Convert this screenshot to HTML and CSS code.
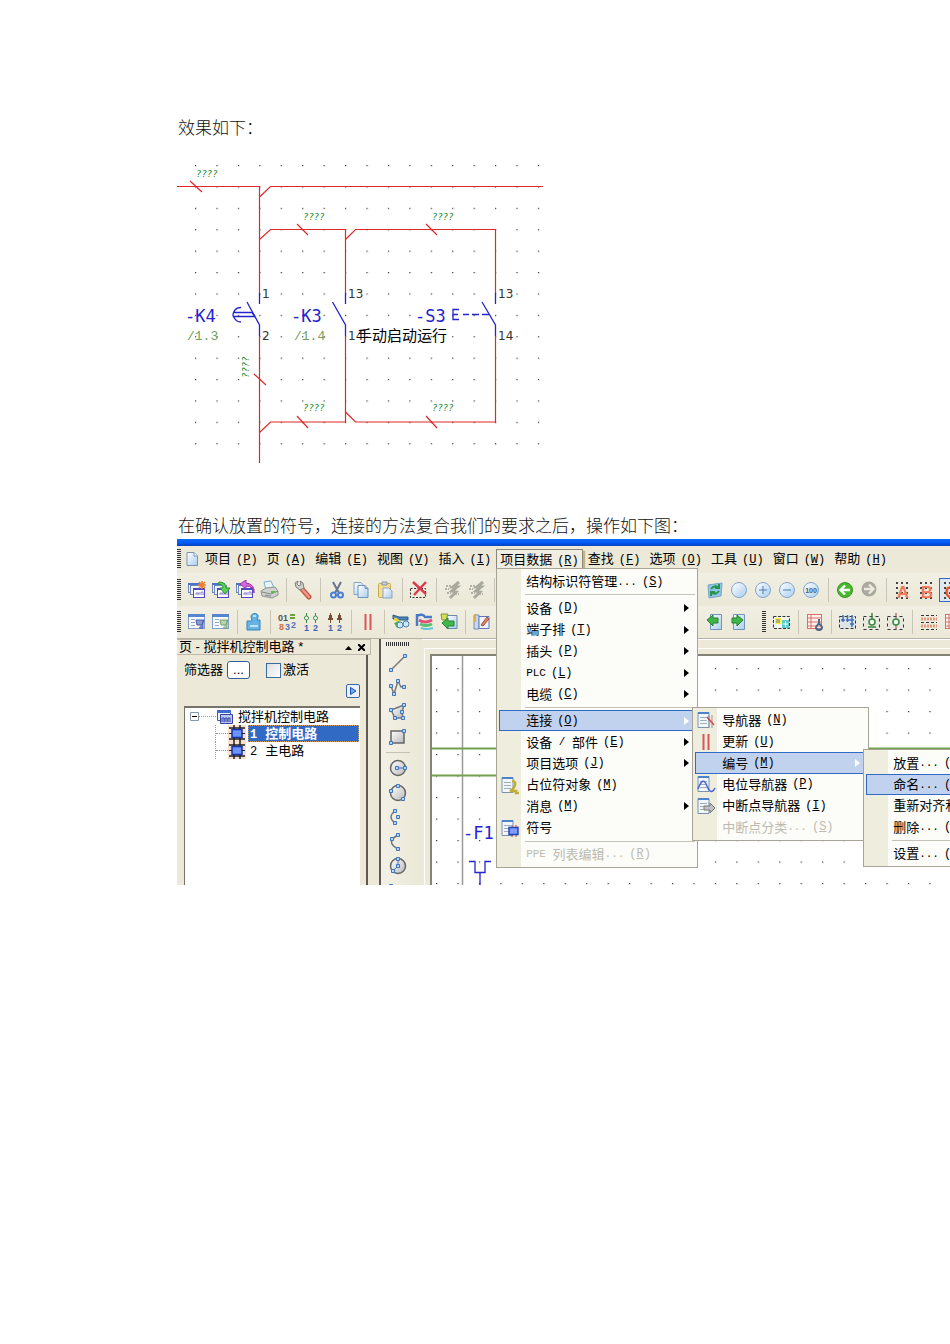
FILE: index.html
```html
<!DOCTYPE html>
<html lang="zh-CN">
<head>
<meta charset="utf-8">
<title>电气控制</title>
<link rel="stylesheet" href="styles.css">
</head>
<body>
<svg class="defs" aria-hidden="true">
  <defs>
    <linearGradient id="sky" x1="0" y1="0" x2="1" y2="1"><stop offset="0" stop-color="#fff"/><stop offset="1" stop-color="#a9cdf0"/></linearGradient>
    <linearGradient id="steel" x1="0" y1="0" x2="1" y2="1"><stop offset="0" stop-color="#fff"/><stop offset="1" stop-color="#b9b9b9"/></linearGradient>
    <pattern id="grid" x="4" y="12" width="21.45" height="21.5" patternUnits="userSpaceOnUse"><rect width="1.2" height="1.2" fill="#333"/></pattern>
    <pattern id="dots" x="18" y="5" width="21.43" height="21.4" patternUnits="userSpaceOnUse"><rect width="1.2" height="1.2" fill="#333"/></pattern>
  </defs>
  <symbol id="i-page" viewBox="0 0 14 16"><path d="M2 1.500h7l3.500 3.500v9.500h-10.500z" fill="url(#sky)" stroke="#7893b5"/><path d="M9 1.500v3.500h3.500" fill="#fff" stroke="#7893b5"/></symbol>
  <symbol id="i-wins" viewBox="0 0 20 20"><rect x="1.500" y="3.500" width="12" height="9" fill="#edf4ff" stroke="#6d86bd"/><path d="M1 4h13" stroke="#4a74c8" stroke-width="2"/><rect x="3.500" y="5.500" width="12" height="9" fill="#edf4ff" stroke="#6d86bd"/><rect x="6.500" y="8.500" width="11" height="9" fill="#fff" stroke="#5146bd"/><path d="M6 9h12" stroke="#5146bd" stroke-width="2"/><path d="M9 15v-2h2v2m1 0v-3m2 3v-3h2v3" fill="none" stroke="#8a80cc"/></symbol>
  <symbol id="i-new" viewBox="0 0 20 20"><use href="#i-wins"/><path d="M15 1v8M11 5h8M12 2l6 6M18 2l-6 6" stroke="#f08030" stroke-width="1.500"/></symbol>
  <symbol id="i-open" viewBox="0 0 20 20"><use href="#i-wins"/><path d="M8 2q7 0 7 6h4l-5 6-5-6h3q0-4-5-4z" fill="#5ed34d" stroke="#269332"/></symbol>
  <symbol id="i-close" viewBox="0 0 20 20"><use href="#i-wins"/><path d="M19 13q0-7-8-7v3l-6-5 6-4v3q9 1 8 10z" fill="#d768dc" stroke="#9d34a9"/></symbol>
  <symbol id="i-print" viewBox="0 0 20 20"><path d="M5 2l7-1 3 7-8 2z" fill="#e6f5ff" stroke="#7faed0"/><path d="M2 11l5-3 9-1 3 4v4l-6 3-10-2z" fill="#cfd2cf" stroke="#8e9390"/><path d="M3 12l9 2 7-3M6 15l6 1" fill="none" stroke="#848a86"/><path d="M12 12h4" stroke="#5cb95c" stroke-width="2"/></symbol>
  <symbol id="i-wrench" viewBox="0 0 20 20"><path d="M8 8l8 9" stroke="#c85a45" stroke-width="5" stroke-linecap="round"/><path d="M9 9l7 8" stroke="#ef9d8d" stroke-width="2" stroke-linecap="round"/><path d="M5 1L2 3l1 4 4 3 4-2-1-5-3-2 1 4-2 1-2-2z" fill="#d2d2cf" stroke="#7d7d79"/></symbol>
  <symbol id="i-cut" viewBox="0 0 20 20"><path d="M6 2l6 11M14 2L8 13" stroke="#65758e" stroke-width="2"/><circle cx="6.500" cy="15" r="2.500" fill="none" stroke="#4a7fd4" stroke-width="2"/><circle cx="13.500" cy="15" r="2.500" fill="none" stroke="#4a7fd4" stroke-width="2"/></symbol>
  <symbol id="i-copy" viewBox="0 0 20 20"><path d="M3 2.500h7l2 2v10H3z" fill="url(#sky)" stroke="#8aa5c5"/><path d="M7 5.500h7l3 3v9H7z" fill="url(#sky)" stroke="#6f92b9"/><path d="M14 5.500v3h3" fill="none" stroke="#6f92b9"/></symbol>
  <symbol id="i-paste" viewBox="0 0 20 20"><rect x="3.500" y="3.500" width="12" height="14" rx="1" fill="#f4de93" stroke="#c6a94b"/><path d="M7 2h5v3H7z" fill="#c9d0d8" stroke="#8c949e"/><path d="M8 8h6l3 3v7H8z" fill="url(#sky)" stroke="#8aa5c5"/></symbol>
  <symbol id="i-del" viewBox="0 0 20 20"><rect x="1.500" y="8.500" width="15" height="9" fill="none" stroke="#333" stroke-dasharray="2 1.500"/><path d="M4 2l13 12M17 2L5 15" stroke="#d83b4b" stroke-width="2.400"/></symbol>
  <symbol id="i-flash" viewBox="0 0 20 20"><path d="M16 2l-6 5 4 0-5 4 4 1-6 6" fill="none" stroke="#aaa99d" stroke-width="3"/><path d="M3 6h5M2 9h4M4 13h4M12 14h4" stroke="#b3b1a5" stroke-width="2" stroke-dasharray="2 1"/></symbol>
  <symbol id="i-refresh" viewBox="0 0 20 20"><path d="M3 5l14-2-1 13-12 2z" fill="#93c4ec" stroke="#76a4cc"/><path d="M6 9q4-5 8-1M14 4v4h-4M14 11q-4 5-8 1M6 16v-4h4" fill="none" stroke="#249448" stroke-width="2"/></symbol>
  <symbol id="i-zoom" viewBox="0 0 20 20"><circle cx="10" cy="10" r="7.500" fill="url(#sky)" stroke="#80a5cc"/></symbol>
  <symbol id="i-zin" viewBox="0 0 20 20"><use href="#i-zoom"/><path d="M6 10h8M10 6v8" stroke="#4f7cab"/></symbol>
  <symbol id="i-zout" viewBox="0 0 20 20"><use href="#i-zoom"/><path d="M6 10h8" stroke="#4f7cab"/></symbol>
  <symbol id="i-back" viewBox="0 0 20 20"><circle cx="10" cy="10" r="7.500" fill="#46b92d" stroke="#369322"/><path d="M15 10H6M10 5.500L5.500 10l4.500 4.500" fill="none" stroke="#fff" stroke-width="2.400"/></symbol>
  <symbol id="i-fwd" viewBox="0 0 20 20"><circle cx="10" cy="9" r="7.500" fill="#aaa99f"/><path d="M5 9h9M10 4.500L14.500 9 10 13.500" fill="none" stroke="#eceade" stroke-width="2.400"/></symbol>
  <symbol id="i-gridb" viewBox="0 0 20 20"><path d="M3 3h15M3 8h15M3 13h15M3 18h15" stroke="#444" stroke-width="2" stroke-dasharray="2 3"/></symbol>
  <symbol id="i-nav" viewBox="0 0 20 20"><rect x="1.500" y="2.500" width="16" height="14" fill="#f7fbff" stroke="#7d9dca"/><path d="M1 3.500h17" stroke="#5685d0" stroke-width="3"/><path d="M4 7.500h4M4 10.500h4M4 13.500h4" stroke="#9aa8c0"/><path d="M9 8h8l-2 5h-5zM16 8v8h-4" fill="#8897d8" stroke="#4e5da8"/></symbol>
  <symbol id="i-nav2" viewBox="0 0 20 20"><rect x="1.500" y="2.500" width="16" height="14" fill="#f7fbff" stroke="#7d9dca"/><path d="M1 3.500h17" stroke="#5685d0" stroke-width="3"/><path d="M4 7.500h4M4 10.500h4M4 13.500h4" stroke="#9aa8c0"/><path d="M9 8h8l-2 5h-5zM16 8v8h-4" fill="#b7d3a9" stroke="#79a06e"/></symbol>
  <symbol id="i-device" viewBox="0 0 20 20"><path d="M8 8q-3-6 3-6.500 5 .5 2 6.500h3v10H3V9h5z" fill="#66b4e6" stroke="#3485bd"/><path d="M6 14h8M9 4h3" stroke="#bce3fa" stroke-width="2"/></symbol>
  <symbol id="i-term" viewBox="0 0 20 20"><path d="M5.500 1v10M14.500 1v10" stroke="#388b43"/><circle cx="5.500" cy="6" r="2" fill="#fff" stroke="#388b43"/><circle cx="14.500" cy="6" r="2" fill="#fff" stroke="#388b43"/></symbol>
  <symbol id="i-plug" viewBox="0 0 20 20"><path d="M5.500 1v3M14.500 1v3M5.500 8v3M14.500 8v3" stroke="#754d34"/><path d="M4 3h3v3h1v2H3V6h1zM13 3h3v3h1v2h-5V6h1z" fill="#754d34"/></symbol>
  <symbol id="i-bars" viewBox="0 0 20 20"><path d="M7.500 2v16M12.500 2v16" stroke="#d9575a" stroke-width="2"/></symbol>
  <symbol id="i-cable" viewBox="0 0 20 20"><path d="M2 3l6 2h9v3H8L2 7z" fill="#4c82ca" stroke="#2b6178"/><path d="M3 7q5 1 5 5" fill="none" stroke="#e8d43e" stroke-width="3"/><path d="M3 11l5-2 2 5-4 2z" fill="#4eb05b"/><circle cx="9" cy="13" r="3" fill="#cbe8ff" stroke="#4d81b5"/><circle cx="15" cy="12" r="3" fill="#cbe8ff" stroke="#4d81b5"/></symbol>
  <symbol id="i-cable2" viewBox="0 0 20 20"><path d="M2 2v12M2 4q6-3 8 1h7" stroke="#4979c5" stroke-width="2.500" fill="none"/><path d="M4 8q6 4 13 0" stroke="#e05078" stroke-width="3" fill="none"/><path d="M5 12q6 3 12 0" stroke="#59bf73" stroke-width="3" fill="none"/><path d="M6 16q6 2 12 0" stroke="#62c4dc" stroke-width="2" fill="none"/></symbol>
  <symbol id="i-import" viewBox="0 0 20 20"><path d="M8 3.500h10v13H8z" fill="url(#sky)" stroke="#6689b0"/><path d="M2 2h7l-2 6H3z" fill="#d5df55" stroke="#799a46"/><path d="M3 11l6-5v3h6v5H9v3z" fill="#43b84a" stroke="#248431"/></symbol>
  <symbol id="i-edit" viewBox="0 0 20 20"><path d="M2 3h5v14H2z" fill="#c7d8ef" stroke="#7590bf"/><path d="M7 4.500h10v12H7z" fill="#eef2ff" stroke="#6477b8"/><path d="M3 2v8" stroke="#e2af3c" stroke-width="2"/><path d="M9 13l6-8 2 2-6 7z" fill="#ec8057" stroke="#9d5340"/></symbol>
  <symbol id="i-pgl" viewBox="0 0 20 20"><path d="M5.500 2.500h11v15h-11z" fill="url(#sky)" stroke="#7594bb"/><path d="M2 8l6-5v3h5v5H8v3z" fill="#42b548" stroke="#23802d"/></symbol>
  <symbol id="i-pgr" viewBox="0 0 20 20"><path d="M4.500 2.500h11v15h-11z" fill="url(#sky)" stroke="#7594bb"/><path d="M14 8L8 3v3H3v5h5v3z" fill="#42b548" stroke="#23802d"/></symbol>
  <symbol id="i-macro" viewBox="0 0 20 20"><rect x="1.500" y="4.500" width="16" height="12" fill="#f5f5ee" stroke="#333" stroke-dasharray="3 1.500"/><path d="M3 6h6v6H3z" fill="#f4ee4b"/><path d="M4 8h4M4 10h4" stroke="#777"/><path d="M10 8h7v8h-7z" fill="#5dcbd0"/><path d="M11 12h5M13.500 9v6" stroke="#fff"/></symbol>
  <symbol id="i-list" viewBox="0 0 20 20"><rect x="2.500" y="2.500" width="14" height="14" fill="#fff0ed" stroke="#d37265"/><path d="M6 2v15M3 6h13M3 10h13M3 14h13" stroke="#d37265"/><path d="M14 7v4l-3 4q0 3 3 3t3-3l-3-4" fill="none" stroke="#4c6888" stroke-width="2"/></symbol>
  <symbol id="i-box1" viewBox="0 0 20 20"><rect x="1.500" y="4.500" width="16" height="12" fill="#dce4e8" stroke="#333" stroke-dasharray="3 2"/><path d="M5 3v7M9.500 3v7M14 3v12M3 8h4M8 8h4M12 8h4M12 12h4" stroke="#426fb9" stroke-width="1.500"/></symbol>
  <symbol id="i-box2" viewBox="0 0 20 20"><rect x="1.500" y="4.500" width="16" height="13" fill="#e8e8df" stroke="#333" stroke-dasharray="3 3"/><path d="M10 1v6M6 15h8" stroke="#388744" stroke-width="1.500"/><circle cx="10" cy="10" r="3" fill="#f0fff0" stroke="#388744" stroke-width="1.500"/></symbol>
  <symbol id="i-box3" viewBox="0 0 20 20"><rect x="1.500" y="4.500" width="16" height="13" fill="#e8e8df" stroke="#333" stroke-dasharray="3 3"/><path d="M10 1v17" stroke="#8c4444"/><circle cx="10" cy="10" r="3" fill="#f0fff0" stroke="#388744" stroke-width="1.500"/></symbol>
  <symbol id="i-box4" viewBox="0 0 20 20"><path d="M2 3.500h16M2 10.500h16M2 17.500h16" stroke="#333" stroke-dasharray="3 2"/><path d="M2 7h16M2 14h16" stroke="#e49a7f" stroke-width="3" stroke-dasharray="2 1"/></symbol>
  <symbol id="i-project" viewBox="0 0 18 16"><path d="M1.500 1.500h13v10h-13z" fill="#eaf2ff" stroke="#3d5caa"/><path d="M1 2.500h14" stroke="#3f6bd0" stroke-width="3"/><path d="M4.500 5.500h12v9h-12z" fill="#b9c7f7" stroke="#3540a0"/><path d="M6 13v-4h2v4m1 0V9h2v4m1 0V9h2v4" fill="none" stroke="#3540a0"/></symbol>
  <symbol id="i-chip" viewBox="0 0 18 17"><path d="M0 0h18v17H0z" fill="#f6dfcf"/><path d="M6 0v17M12 0v17M1 3h16M1 14h16" stroke="#222" stroke-width="1.500"/><path d="M4 4.500h10v8H4z" fill="#6a94ff" stroke="#1630a8" stroke-width="1.500"/><path d="M1 8.500h3M14 8.500h3" stroke="#222"/></symbol>
  <symbol id="i-doc" viewBox="0 0 20 20"><path d="M2 2.500h11v15H2z" fill="#f2f6fb" stroke="#7a93ad"/><path d="M2 3h11" stroke="#4c83c9" stroke-width="2"/><path d="M4 7.500h7M4 10.500h7M4 13.500h7" stroke="#9eb0bf"/></symbol>
  <symbol id="i-m1" viewBox="0 0 20 20"><use href="#i-doc"/><path d="M12 6q4 0 3 4t-5 6h6v2h3" fill="none" stroke="#bfae35" stroke-width="2.500"/></symbol>
  <symbol id="i-m2" viewBox="0 0 20 20"><use href="#i-doc"/><path d="M12 7v12M16 7v12" stroke="#bd3e4c"/><path d="M9 9.500h9v7H9z" fill="#7f9dff" stroke="#2744b5" stroke-width="1.500"/></symbol>
  <symbol id="i-m3" viewBox="0 0 20 20"><use href="#i-doc"/><path d="M13 5v13M16 5v13" stroke="#999"/><path d="M11 7l7 8" stroke="#dc4150" stroke-width="1.500"/></symbol>
  <symbol id="i-m4" viewBox="0 0 20 20"><use href="#i-doc"/><path d="M2 15q5-14 9-3 4 10 8 2" fill="none" stroke="#4765da" stroke-width="1.500"/></symbol>
  <symbol id="i-m5" viewBox="0 0 20 20"><use href="#i-doc"/><path d="M8 10h6V7l5 5-5 5v-3H8z" fill="#bfc1c2" stroke="#777"/></symbol>
  <symbol id="nd" viewBox="0 0 4 4"><path d="M.5.5h3v3h-3z" fill="#bcd8ff" stroke="#3c74bd"/></symbol>
  <symbol id="d-line" viewBox="0 0 20 20"><path d="M3 17L17 3" stroke="#777" stroke-width="1.500"/><use href="#nd" x="1" y="15" width="4" height="4"/><use href="#nd" x="15" y="1" width="4" height="4"/></symbol>
  <symbol id="d-poly" viewBox="0 0 20 20"><path d="M3 8l3 8L10 3l3 6 4-1" fill="none" stroke="#777" stroke-width="1.500"/><use href="#nd" x="1" y="6" width="4" height="4"/><use href="#nd" x="4" y="14" width="4" height="4"/><use href="#nd" x="8" y="1" width="4" height="4"/><use href="#nd" x="14" y="7" width="4" height="4"/></symbol>
  <symbol id="d-gon" viewBox="0 0 20 20"><path d="M3 8l13-5-2 7 1 6H7z" fill="url(#steel)" stroke="#777" stroke-width="1.500"/><use href="#nd" x="1" y="6" width="4" height="4"/><use href="#nd" x="14" y="1" width="4" height="4"/><use href="#nd" x="12" y="8" width="4" height="4"/><use href="#nd" x="13" y="14" width="4" height="4"/><use href="#nd" x="5" y="14" width="4" height="4"/></symbol>
  <symbol id="d-rect" viewBox="0 0 20 20"><path d="M3 4h13v12H3z" fill="url(#steel)" stroke="#666" stroke-width="1.500"/><use href="#nd" x="1" y="14" width="4" height="4"/><use href="#nd" x="14" y="2" width="4" height="4"/></symbol>
  <symbol id="d-circ" viewBox="0 0 20 20"><circle cx="10" cy="10" r="7.500" fill="url(#steel)" stroke="#666" stroke-width="1.500"/><path d="M9 10h8" stroke="#3c74bd"/><use href="#nd" x="7" y="8" width="4" height="4"/><use href="#nd" x="15" y="8" width="4" height="4"/></symbol>
  <symbol id="d-circ3" viewBox="0 0 20 20"><circle cx="10" cy="10" r="7.500" fill="url(#steel)" stroke="#666" stroke-width="1.500"/><use href="#nd" x="8" y="1" width="4" height="4"/><use href="#nd" x="1" y="6" width="4" height="4"/><use href="#nd" x="13" y="14" width="4" height="4"/></symbol>
  <symbol id="d-arc" viewBox="0 0 20 20"><path d="M7 4Q-1 10 7 16" fill="none" stroke="#777" stroke-width="1.500"/><use href="#nd" x="5" y="2" width="4" height="4"/><use href="#nd" x="5" y="14" width="4" height="4"/><use href="#nd" x="8" y="8" width="4" height="4"/></symbol>
  <symbol id="d-arc3" viewBox="0 0 20 20"><path d="M10 3Q-3 10 10 17" fill="none" stroke="#777" stroke-width="1.500"/><use href="#nd" x="8" y="1" width="4" height="4"/><use href="#nd" x="8" y="15" width="4" height="4"/><use href="#nd" x="2" y="5" width="4" height="4"/></symbol>
  <symbol id="d-sect" viewBox="0 0 20 20"><circle cx="10" cy="10" r="7.500" fill="url(#steel)" stroke="#666" stroke-width="1.500"/><path d="M10 3v7l-5 5" fill="none" stroke="#3c74bd"/><use href="#nd" x="8" y="1" width="4" height="4"/><use href="#nd" x="8" y="8" width="4" height="4"/><use href="#nd" x="3" y="13" width="4" height="4"/></symbol>
  <symbol id="d-spl" viewBox="0 0 20 20"><path d="M3 5q5-2 9 7" fill="none" stroke="#777" stroke-width="1.500"/><use href="#nd" x="1" y="3" width="4" height="4"/><use href="#nd" x="8" y="6" width="4" height="4"/></symbol>
</svg>

<main class="doc">
  <p class="para">效果如下：</p>
  <svg class="circuit" width="366" height="304" viewBox="177 160 366 304" role="img" aria-label="电路图">
    <svg x="177" y="160" width="366" height="288" viewBox="0 0 366 288"><rect width="366" height="288" fill="url(#dots)"/></svg>
    <g fill="none" stroke="#e02828" stroke-width="1.200">
      <path d="M177 186.500h82.500V293M259.500 336v127M259.500 197l11-10.500H543M259.500 239.500l11-10h75V293M345.500 239.500l10-10h140V293"/>
      <path d="M345.500 336v86h-75l-11 10.500M345.500 412l10 10h140v-86"/>
      <path d="M190 181l12 11M297 224l11 11M426 224l11 11M254 374l12 11M297 416l11 12M426 416l11 12"/>
    </g>
    <g fill="none" stroke="#2424cc" stroke-width="1.300">
      <path d="M259.500 293v11M259.500 336v-11l-12.500-23M345.500 293v11M345.500 336v-11l-13-23M495.500 293v11M495.500 336v-11l-13.500-23"/>
      <path d="M241 307.500q-4 0-6 2.500-4 5 0 9 2 3 6 3M233 312.500h19M233 316.500h22M255 316.500l-3-4"/>
      <path d="M459 309.500h-6v10h6M453 314.500h5M463 314.500h6M472 314.500h7M482 314.500h7"/>
    </g>
    <g class="dev"><text x="185" y="322">-K4</text><text x="291" y="322">-K3</text><text x="415" y="322">-S3</text></g>
    <g class="ref"><text x="187" y="340">/1.3</text><text x="294" y="340">/1.4</text></g>
    <g class="pin"><text x="262" y="298">1</text><text x="262" y="340">2</text><text x="348" y="298">13</text><text x="348" y="340">14</text><text x="498" y="298">13</text><text x="498" y="340">14</text></g>
    <text class="note" x="357" y="341">手动启动运行</text>
    <g class="unk"><text x="196" y="177">????</text><text x="303" y="220">????</text><text x="432" y="220">????</text><text x="303" y="411">????</text><text x="432" y="411">????</text><text transform="translate(249 378) rotate(-90)">????</text></g>
  </svg>
  <p class="para para-next">在确认放置的符号，连接的方法复合我们的要求之后，操作如下图：</p>

  <section class="app">
    <div class="titlebar"></div>
    <nav class="menubar">
      <span class="grip"></span>
      <svg class="pageicon" width="14" height="16"><use href="#i-page"/></svg>
      <button class="mb">项目<kbd>(<u>P</u>)</kbd></button>
      <button class="mb">页<kbd>(<u>A</u>)</kbd></button>
      <button class="mb">编辑<kbd>(<u>E</u>)</kbd></button>
      <button class="mb">视图<kbd>(<u>V</u>)</kbd></button>
      <button class="mb">插入<kbd>(<u>I</u>)</kbd></button>
      <div class="anchor">
        <button class="mb mb-open">项目数据<kbd>(<u>R</u>)</kbd></button>
        <div class="menu menu-main">
          <button class="mi">结构标识符管理<i>...</i><kbd>(<u>S</u>)</kbd></button>
          <hr class="msep">
          <button class="mi more">设备<kbd>(<u>D</u>)</kbd></button>
          <button class="mi more">端子排<kbd>(<u>T</u>)</kbd></button>
          <button class="mi more">插头<kbd>(<u>P</u>)</kbd></button>
          <button class="mi more"><i>PLC</i><kbd>(<u>L</u>)</kbd></button>
          <button class="mi more">电缆<kbd>(<u>C</u>)</kbd></button>
          <hr class="msep">
          <div class="mi-wrap">
            <button class="mi more on">连接<kbd>(<u>O</u>)</kbd></button>
            <div class="menu menu-conn">
              <button class="mi"><svg><use href="#i-m3"/></svg>导航器<kbd>(<u>N</u>)</kbd></button>
              <button class="mi"><svg><use href="#i-bars"/></svg>更新<kbd>(<u>U</u>)</kbd></button>
              <div class="mi-wrap">
                <button class="mi more on">编号<kbd>(<u>M</u>)</kbd></button>
                <div class="menu menu-num">
                  <button class="mi">放置<i>...</i><kbd>(<u>P</u>)</kbd></button>
                  <button class="mi on">命名<i>...</i><kbd>(<u>N</u>)</kbd></button>
                  <button class="mi">重新对齐和</button>
                  <button class="mi">删除<i>...</i><kbd>(<u>D</u>)</kbd></button>
                  <hr class="msep">
                  <button class="mi">设置<i>...</i><kbd>(<u>S</u>)</kbd></button>
                </div>
              </div>
              <button class="mi"><svg><use href="#i-m4"/></svg>电位导航器<kbd>(<u>P</u>)</kbd></button>
              <button class="mi"><svg><use href="#i-m5"/></svg>中断点导航器<kbd>(<u>I</u>)</kbd></button>
              <button class="mi" disabled>中断点分类<i>...</i><kbd>(<u>S</u>)</kbd></button>
            </div>
          </div>
          <button class="mi more">设备<i> / </i>部件<kbd>(<u>E</u>)</kbd></button>
          <button class="mi more">项目选项<kbd>(<u>J</u>)</kbd></button>
          <button class="mi"><svg><use href="#i-m1"/></svg>占位符对象<kbd>(<u>M</u>)</kbd></button>
          <button class="mi more">消息<kbd>(<u>M</u>)</kbd></button>
          <button class="mi"><svg><use href="#i-m2"/></svg>符号</button>
          <hr class="msep">
          <button class="mi" disabled><i>PPE </i>列表编辑<i>...</i><kbd>(<u>R</u>)</kbd></button>
        </div>
      </div>
      <button class="mb">查找<kbd>(<u>F</u>)</kbd></button>
      <button class="mb">选项<kbd>(<u>O</u>)</kbd></button>
      <button class="mb">工具<kbd>(<u>U</u>)</kbd></button>
      <button class="mb">窗口<kbd>(<u>W</u>)</kbd></button>
      <button class="mb">帮助<kbd>(<u>H</u>)</kbd></button>
    </nav>

    <div class="toolbar toolbar-std">
      <div class="tgroup tgroup-left">
        <span class="grip"></span>
        <button class="tb" aria-label="新建"><svg><use href="#i-new"/></svg></button>
        <button class="tb" aria-label="打开"><svg><use href="#i-open"/></svg></button>
        <button class="tb" aria-label="关闭"><svg><use href="#i-close"/></svg></button>
        <button class="tb" aria-label="打印"><svg><use href="#i-print"/></svg></button>
        <span class="tsep"></span>
        <button class="tb" aria-label="设置"><svg><use href="#i-wrench"/></svg></button>
        <span class="tsep"></span>
        <button class="tb" aria-label="剪切"><svg><use href="#i-cut"/></svg></button>
        <button class="tb" aria-label="复制"><svg><use href="#i-copy"/></svg></button>
        <button class="tb" aria-label="粘贴"><svg><use href="#i-paste"/></svg></button>
        <span class="tsep"></span>
        <button class="tb" aria-label="删除"><svg><use href="#i-del"/></svg></button>
        <span class="tsep"></span>
        <button class="tb" aria-label="撤销"><svg><use href="#i-flash"/></svg></button>
        <button class="tb" aria-label="重做"><svg><use href="#i-flash"/></svg></button>
        <span class="tsep"></span>
      </div>
      <div class="tgroup">
        <button class="tb" aria-label="刷新"><svg><use href="#i-refresh"/></svg></button>
        <button class="tb" aria-label="缩放"><svg><use href="#i-zoom"/></svg></button>
        <button class="tb" aria-label="放大"><svg><use href="#i-zin"/></svg></button>
        <button class="tb" aria-label="缩小"><svg><use href="#i-zout"/></svg></button>
        <button class="tb" aria-label="整页"><svg><use href="#i-zoom"/><text x="10" y="12.500" text-anchor="middle" class="tiny" fill="#44617f">100</text></svg></button>
        <span class="tsep"></span>
        <button class="tb" aria-label="后退"><svg><use href="#i-back"/></svg></button>
        <button class="tb" aria-label="前进"><svg><use href="#i-fwd"/></svg></button>
        <span class="tsep"></span>
        <button class="tb" aria-label="栅格 A"><svg><use href="#i-gridb"/><text x="10" y="18" text-anchor="middle" class="big" fill="#ef7b5d">A</text></svg></button>
        <button class="tb" aria-label="栅格 B"><svg><use href="#i-gridb"/><text x="10" y="18" text-anchor="middle" class="big" fill="#ef7b5d">B</text></svg></button>
        <button class="tb tb-on" aria-label="栅格 C"><svg><use href="#i-gridb"/><text x="10" y="18" text-anchor="middle" class="big" fill="#e75331">C</text></svg></button>
      </div>
    </div>
    <div class="toolbar toolbar-last">
      <div class="tgroup tgroup-left">
        <span class="grip"></span>
        <button class="tb" aria-label="页导航器"><svg><use href="#i-nav"/></svg></button>
        <button class="tb" aria-label="图形导航器"><svg><use href="#i-nav2"/></svg></button>
        <span class="tsep"></span>
        <button class="tb" aria-label="设备"><svg><use href="#i-device"/></svg></button>
        <span class="tsep"></span>
        <button class="tb" aria-label="编号"><svg><text x="1" y="9" class="mid" fill="#555">01</text><text x="2" y="18" class="mid" fill="#d27048">8</text><text x="8" y="18" class="mid" fill="#5574bc">3</text><path d="M13 3h5M13 6h5" stroke="#69a240" stroke-width="2"/><text x="14" y="16" class="mid" fill="#5574bc">2</text></svg></button>
        <button class="tb" aria-label="端子"><svg><use href="#i-term"/><text x="3" y="19" class="mid" fill="#3f65b5">1</text><text x="12" y="19" class="mid" fill="#3f65b5">2</text></svg></button>
        <button class="tb" aria-label="插头"><svg><use href="#i-plug"/><text x="3" y="19" class="mid" fill="#3f65b5">1</text><text x="12" y="19" class="mid" fill="#3f65b5">2</text></svg></button>
        <span class="tsep"></span>
        <button class="tb" aria-label="连接"><svg><use href="#i-bars"/></svg></button>
        <span class="tsep"></span>
        <button class="tb" aria-label="电缆"><svg><use href="#i-cable"/></svg></button>
        <button class="tb" aria-label="电缆编辑"><svg><use href="#i-cable2"/></svg></button>
        <button class="tb" aria-label="导入"><svg><use href="#i-import"/></svg></button>
        <span class="tsep"></span>
        <button class="tb" aria-label="编辑"><svg><use href="#i-edit"/></svg></button>
      </div>
      <div class="tgroup">
        <button class="tb" aria-label="上一页"><svg><use href="#i-pgl"/></svg></button>
        <button class="tb" aria-label="下一页"><svg><use href="#i-pgr"/></svg></button>
        <span class="grip grip-mid"></span>
        <button class="tb" aria-label="宏"><svg><use href="#i-macro"/></svg></button>
        <span class="tsep"></span>
        <button class="tb" aria-label="列表"><svg><use href="#i-list"/></svg></button>
        <span class="tsep"></span>
        <button class="tb" aria-label="黑盒"><svg><use href="#i-box1"/></svg></button>
        <button class="tb" aria-label="PLC 盒"><svg><use href="#i-box2"/></svg></button>
        <button class="tb" aria-label="位置盒"><svg><use href="#i-box3"/></svg></button>
        <span class="tsep"></span>
        <button class="tb" aria-label="结构盒"><svg><use href="#i-box4"/></svg></button>
        <button class="tb" aria-label="端子排"><svg><use href="#i-list"/></svg></button>
      </div>
    </div>

    <div class="work">
      <aside class="panel">
        <header class="phead"><span>页 - 搅拌机控制电路 *</span>
          <button class="pbtn" aria-label="收起"><svg width="7" height="5"><path d="M0 5l3.500-4L7 5z"/></svg></button>
          <button class="pbtn" aria-label="关闭"><svg width="7" height="7"><path d="M0 0l7 7M7 0L0 7" stroke="#000" stroke-width="2"/></svg></button>
        </header>
        <div class="pbody">
          <div class="filter">
            <label for="flt">筛选器</label><button id="flt" class="dotbtn">...</button>
            <input type="checkbox" id="act" class="chk"><label for="act">激活</label>
          </div>
          <button class="play" aria-label="展开"><svg width="7" height="8"><path d="M.5.500L6 4 .5 7.500z" fill="#78aaf0" stroke="#1b52b8"/></svg></button>
          <ul class="tree">
            <li class="trow trow-root"><svg class="exp" width="9" height="9"><path d="M.5.500h8v8h-8z" fill="#fff" stroke="#8899aa"/><path d="M2 4.500h5" stroke="#000"/></svg><span class="twig"></span><svg width="18" height="16"><use href="#i-project"/></svg><span class="tlabel">搅拌机控制电路</span></li>
            <li class="trow trow-sub"><span class="twig"></span><svg width="18" height="17"><use href="#i-chip"/></svg><span class="tlabel tsel"><i>1</i>控制电路</span></li>
            <li class="trow trow-sub"><span class="twig"></span><svg width="18" height="17"><use href="#i-chip"/></svg><span class="tlabel"><i>2</i>主电路</span></li>
          </ul>
        </div>
      </aside>
      <div class="strip">
        <span class="hgrip"></span>
        <button class="db" aria-label="直线"><svg><use href="#d-line"/></svg></button>
        <button class="db" aria-label="折线"><svg><use href="#d-poly"/></svg></button>
        <button class="db" aria-label="多边形"><svg><use href="#d-gon"/></svg></button>
        <button class="db" aria-label="长方形"><svg><use href="#d-rect"/></svg></button>
        <span class="hsep"></span>
        <button class="db" aria-label="圆"><svg><use href="#d-circ"/></svg></button>
        <button class="db" aria-label="三点圆"><svg><use href="#d-circ3"/></svg></button>
        <button class="db" aria-label="圆弧"><svg><use href="#d-arc"/></svg></button>
        <button class="db" aria-label="三点圆弧"><svg><use href="#d-arc3"/></svg></button>
        <button class="db" aria-label="扇形"><svg><use href="#d-sect"/></svg></button>
        <button class="db" aria-label="样条"><svg><use href="#d-spl"/></svg></button>
      </div>
      <div class="stage">
        <div class="frame">
          <svg class="canvas" role="img" aria-label="图纸">
            <rect width="100%" height="100%" fill="url(#grid)"/>
            <path d="M30.500 0v230" stroke="#999" stroke-width="1.500"/>
            <path d="M0 92.500h2000M0 119.500h66" stroke="#72a14d" stroke-width="2"/>
            <text class="dev" x="31" y="183">-F1</text>
            <path d="M37 205.500h6v11h10v-11h6M48 216.500v14" fill="none" stroke="#2424cc" stroke-width="1.300"/>
          </svg>
        </div>
      </div>
    </div>
  </section>
</main>
</body>
</html>
```
FILE: styles.css
```css
* { box-sizing: border-box; }
body { margin: 0; background: #fff; color: #000; font-family: "Liberation Sans", "Noto Sans CJK SC", sans-serif; overflow-x: hidden; }
button { font: inherit; color: inherit; border: 0; background: none; padding: 0; margin: 0; }
.defs { position: absolute; width: 0; height: 0; }

.doc { padding: 117px 0 0 177px; }
.para { margin: 0; padding-left: 1px; font: 300 17px/24px "Liberation Serif", "Noto Sans CJK SC", serif; color: #111; }
.para-next { margin-top: 51px; }
.circuit { display: block; margin-top: 19px; }
.dev { font: 17px "DejaVu Sans Mono", monospace; fill: #2424cc; }
.ref { font: 13px "Liberation Mono", monospace; fill: #6f9f58; }
.pin { font: 12px "DejaVu Sans", sans-serif; fill: #333; }
.note { font: 15px "Noto Sans CJK SC", sans-serif; }
.unk { font: italic 9px "DejaVu Sans Mono", monospace; fill: #168a2a; }
.tiny { font: bold 7px "Liberation Sans", sans-serif; }
.mid { font: bold 9px "Liberation Sans", sans-serif; }
.big { font: bold 17px "Liberation Sans", sans-serif; }

.app { position: relative; overflow: hidden; background: #ece9d8; font-size: 13px; line-height: 20px; }
.titlebar { height: 7px; background: linear-gradient(#0a6cff, #0058ee 60%, #0040c0); }
.grip { flex: none; width: 4px; height: 20px; background: repeating-linear-gradient(#333 0 1px, transparent 1px 2px); }
.menubar { display: flex; align-items: center; height: 27px; padding-bottom: 2px; gap: 1px; white-space: nowrap; }
.pageicon { flex: none; margin: 0 1px 0 3px; }
.mb { flex: none; height: 19px; padding: 0 4px; line-height: 19px; }
kbd, .mi i, .trow i { font: normal 11px "Liberation Mono", monospace; white-space: pre; }
kbd { margin-left: 5px; font-size: 12px; }
.anchor { position: relative; flex: none; z-index: 2; }
.mb-open { display: block; border: 1px solid #8a867a; border-bottom: 0; padding: 0 3px; background: #f0eee2; box-shadow: 2px 2px 1px #c2b67f; }

.menu { position: absolute; display: flex; flex-direction: column; padding: 2px; border: 1px solid #a7a496; background: linear-gradient(90deg, #efedde 0 24px, #fcfcf9 24px); background-clip: padding-box; }
.menu-main { left: 0; top: 100%; width: 202px; height: 300px; }
.menu-conn { left: calc(100% - 3px); top: -3px; width: 177px; height: 134px; z-index: 1; }
.menu-num { left: calc(100% - 3px); top: -3px; width: 177px; height: 118px; z-index: 2; }
.mi { position: relative; display: flex; align-items: center; flex: 1 1 0; min-height: 0; width: 100%; padding-left: 27px; line-height: 19px; text-align: left; white-space: nowrap; }
.mi-wrap { position: relative; display: flex; flex: 1 1 0; min-height: 0; }
.mi svg { position: absolute; left: 1px; width: 20px; height: 20px; }
.mi.on { background: #c1d2ee; box-shadow: inset 0 0 0 1px #316ac5; }
.mi:disabled { color: #bdbbb0; }
.more::after { content: ""; position: absolute; right: 6px; border: solid transparent; border-width: 4px 0 4px 5px; border-left-color: #000; }
.more.on::after { border-left-color: #fff; }
.msep { flex: 0 0 1px; margin: 2px 0 2px 26px; border: 0; background: #c5c2b8; }

.toolbar { display: flex; height: 33px; background: linear-gradient(#f1efe3, #ebe8d7); }
.toolbar-last { border-bottom: 1px solid #b5b2a4; }
.tgroup { display: flex; align-items: center; flex: none; }
.tgroup-left { width: 526px; }
.tgroup .grip { margin: 0 4px 0 0; height: 22px; }
.tgroup .grip-mid { margin: 0 4px 0 11px; }
.tb { flex: none; display: grid; place-items: center; width: 24px; height: 24px; }
.tb svg { width: 20px; height: 20px; }
.tb-on { border: 1px solid #316ac5; background: #dfe7f3; }
.tsep { flex: none; width: 1px; height: 24px; margin: 0 4px; background: #c9c6b7; }
.toolbar-std .tsep { margin-left: 5px; }

.work { display: flex; height: 246px; }
.panel { flex: none; width: 194px; display: flex; flex-direction: column; }
.phead { display: flex; align-items: center; gap: 6px; height: 16px; padding: 0 5px 0 2px; border: 1px solid #bdb9aa; border-left: 0; line-height: 14px; white-space: nowrap; }
.phead span { flex: 1; }
.pbtn { display: grid; place-items: center; width: 7px; height: 10px; }
.pbody { flex: 1; display: flex; flex-direction: column; margin-right: 3px; padding: 5px 6px 0 7px; border-right: 2px solid #5c5a52; }
.filter { display: flex; align-items: center; height: 20px; }
.dotbtn { width: 23px; height: 18px; margin: 0 16px 0 4px; border: 1px solid #315d92; border-radius: 3px; background: #fff; line-height: 16px; }
.chk { appearance: none; width: 15px; height: 15px; margin: 0 2px 0 0; border: 1px solid #376b9e; background: linear-gradient(135deg, #ddd, #fff); }
.play { align-self: flex-end; display: grid; place-items: center; width: 14px; height: 14px; margin: 4px 0 8px; border: 1px solid #3567aa; border-radius: 2px; background: #eaf2ff; }
.tree { flex: 1; margin: 0; padding: 0 1px 0 5px; list-style: none; background: #fff; border: solid #77756b; border-width: 2px 0 0 1px; }
.trow { display: flex; align-items: center; height: 17px; line-height: 17px; white-space: nowrap; }
.twig { width: 17px; border-top: 1px dotted #999; }
.trow-sub { margin-left: 25px; border-left: 1px dotted #999; }
.trow-sub .twig { width: 12px; }
.trow-root .tlabel { padding-left: 4px; }
.trow-sub .tlabel { padding-left: 4px; flex: 1; }
.trow i { margin-right: 8px; font-size: 12px; }
.trow .tsel { margin-left: 2px; padding-left: 2px; background: #316ac5; color: #fff; font-weight: bold; outline: 1px dotted #d8a05a; outline-offset: -1px; }
.trow .tsel i { font-weight: bold; }

.strip { flex: none; width: 43px; display: flex; flex-direction: column; align-items: center; margin-left: 8px; padding: 3px 10px 0 2px; border-left: 2px solid #5c5a52; background: linear-gradient(90deg, #f3f1e6, #ebe8d7); overflow: hidden; }
.hgrip { flex: none; width: 24px; height: 4px; margin-bottom: 5px; background: repeating-linear-gradient(90deg, #333 0 1px, transparent 1px 2px); }
.db { flex: none; display: grid; place-items: center; width: 24px; height: 24px; margin-bottom: 1px; }
.db:nth-of-type(2n) { margin-bottom: 0; }
.db svg { width: 20px; height: 20px; }
.hsep { flex: none; width: 24px; height: 1px; margin: 3px 0; background: #c5c2b3; }
.stage { flex: 1; min-width: 0; display: flex; padding: 8px 0 0 2px; border-top: 1px solid #fff; }
.frame { flex: 1; min-width: 0; display: flex; padding: 5px 0 0 5px; border: solid #fff; border-width: 1px 0 0 1px; }
.canvas { flex: 1; min-width: 0; width: 100%; height: 100%; background: #fff; border: solid #858378; border-width: 2px 0 0 2px; }
```
